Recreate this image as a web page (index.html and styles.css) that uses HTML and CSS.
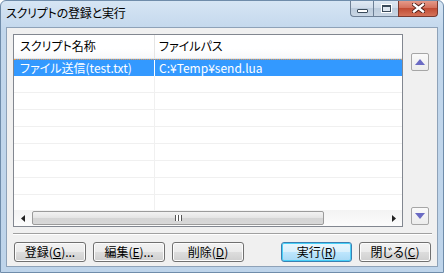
FILE: index.html
```html
<!DOCTYPE html>
<html lang="ja">
<head>
	<meta charset="UTF-8">
	<title>スクリプトの登録と実行</title>
	<link rel="stylesheet" href="styles.css">
</head>
<body>
	<div class="window">
		<div class="titlebar">
			<span class="title">スクリプトの登録と実行</span>
			<div class="caption">
				<div class="cap min"><span class="minbar"></span></div>
				<div class="cap max"><span class="maxbox"></span></div>
				<div class="cap close">
					<svg width="13" height="10" viewBox="0 0 13 10">
						<path d="M2 1.5 L11 8.5 M11 1.5 L2 8.5" stroke="#4a1a14" stroke-width="4.2" stroke-linecap="square"/>
						<path d="M2 1.5 L11 8.5 M11 1.5 L2 8.5" stroke="#fff" stroke-width="2.4" stroke-linecap="square"/>
					</svg>
				</div>
			</div>
		</div>

		<div class="client">
			<div class="main">
				<div class="list">
					<div class="rows">
						<div class="row head"><div class="c1">スクリプト名称</div><div class="c2">ファイルパス</div></div>
						<div class="row sel"><div class="c1">ファイル送信(test.txt)</div><div class="c2">C:¥Temp¥send.lua</div></div>
						<div class="row"><div class="c1"></div><div class="c2"></div></div>
						<div class="row"><div class="c1"></div><div class="c2"></div></div>
						<div class="row"><div class="c1"></div><div class="c2"></div></div>
						<div class="row"><div class="c1"></div><div class="c2"></div></div>
						<div class="row"><div class="c1"></div><div class="c2"></div></div>
						<div class="row"><div class="c1"></div><div class="c2"></div></div>
						<div class="row"><div class="c1"></div><div class="c2"></div></div>
						<div class="row"><div class="c1"></div><div class="c2"></div></div>
					</div>
					<div class="hscroll">
						<div class="arrow"><svg width="4" height="7" viewBox="0 0 4 7"><path d="M4 0 L0 3.5 L4 7 Z" fill="#222"/></svg></div>
						<div class="track">
							<div class="thumb"><span class="grip"></span></div>
						</div>
						<div class="arrow"><svg width="4" height="7" viewBox="0 0 4 7"><path d="M0 0 L4 3.5 L0 7 Z" fill="#222"/></svg></div>
					</div>
				</div>
				<div class="side">
					<div class="sbtn"><svg width="10" height="6" viewBox="0 0 10 6"><path d="M5 0 L10 6 L0 6 Z" fill="#6b6bc4"/></svg></div>
					<div class="sbtn"><svg width="10" height="6" viewBox="0 0 10 6"><path d="M0 0 L10 0 L5 6 Z" fill="#6b6bc4"/></svg></div>
				</div>
			</div>

			<div class="sep"></div>

			<div class="buttons">
				<div class="group">
					<button class="btn">登録(<u>G</u>)...</button>
					<button class="btn">編集(<u>E</u>)...</button>
					<button class="btn">削除(<u>D</u>)</button>
				</div>
				<div class="group">
					<button class="btn default">実行(<u>R</u>)</button>
					<button class="btn">閉じる(<u>C</u>)</button>
				</div>
			</div>
		</div>
	</div>
</body>
</html>
```

FILE: styles.css
```css
body{
	margin: 0;
	font-family: "Noto Sans CJK JP", "Liberation Sans", sans-serif;
	font-size: 12px;
	font-feature-settings: "palt";
}

.window{
	width: 444px;
	height: 273px;
	box-sizing: border-box;
	border: 1px solid #6f8caa;
	border-radius: 6px 6px 0 0;
	background: linear-gradient(#d6e5f4, #c2d7ec 30px, #bed4ea);
	display: flex;
	flex-direction: column;
	overflow: hidden;
}

.titlebar{
	height: 26px;
	display: flex;
	justify-content: space-between;
	align-items: flex-start;
	padding: 0 5px 0 5px;
}
.title{
	margin-top: 3px;
	color: #000;
	line-height: 17px;
	letter-spacing: -0.2px;
}

.caption{
	display: flex;
	height: 17px;
	margin-top: -1px;
}
.cap{
	height: 17px;
	box-sizing: border-box;
	border: 1px solid #6d7f95;
	border-top: none;
	display: flex;
	align-items: center;
	justify-content: center;
}
.min{
	width: 23px;
	border-radius: 0 0 0 4px;
	border-right: none;
	background: linear-gradient(#e2ebf5, #d0dcea 50%, #bccbdc 51%, #c9d6e4);
}
.max{
	width: 25px;
	border-right: none;
	background: linear-gradient(#e2ebf5, #d0dcea 50%, #bccbdc 51%, #c9d6e4);
}
.close{
	width: 40px;
	border-radius: 0 0 4px 0;
	border-color: #7a3a30;
	background: linear-gradient(#e8a090, #d4705c 50%, #c04a32 51%, #d4735a);
}
.minbar{
	width: 9px;
	height: 2px;
	margin-top: 5px;
	background: #fff;
	border: 1px solid #3a4a5a;
	border-radius: 1px;
}
.maxbox{
	width: 7px;
	height: 4px;
	border: 1px solid #3a4a5a;
	border-top-width: 2px;
	background: #dfe7f0;
	box-shadow: 0 0 0 1px #fff;
}

.client{
	flex: 1;
	margin: 0 5px 5px 5px;
	box-sizing: border-box;
	border: 1px solid #8ea2b8;
	background: #f0f0f0;
	padding: 6px 0 4px 0;
	display: flex;
	flex-direction: column;
}

.main{
	display: flex;
	height: 193px;
	margin: 0 8px 0 6px;
	gap: 8px;
}

.list{
	width: 390px;
	box-sizing: border-box;
	border: 1px solid #828790;
	background: #fff;
	display: flex;
	flex-direction: column;
}
.rows{
	flex: 1;
	overflow: hidden;
}
.row{
	display: flex;
	height: 17px;
	box-sizing: border-box;
	border-bottom: 1px solid #f0f0f0;
	line-height: 16px;
}
.c1{
	width: 141px;
	box-sizing: border-box;
	padding-left: 6px;
	border-right: 1px solid #f0f0f0;
	white-space: nowrap;
}
.c2{
	flex: 1;
	padding-left: 4px;
	white-space: nowrap;
}
.head{
	height: 24px;
	line-height: 22px;
	border-bottom: 1px solid #e5e5e5;
	background: linear-gradient(#fff, #fff 60%, #f7f8fa);
	color: #000;
}
.head .c1{
	border-right-color: #e5e5e5;
}
.sel{
	background: #3399ff;
	color: #fff;
	border-top: 1px dotted #e89a50;
	border-bottom: none;
	height: 17px;
	line-height: 15px;
}
.sel .c1{
	border-right-color: #ffffff;
}

.hscroll{
	height: 16px;
	display: flex;
	align-items: center;
	background: linear-gradient(#f3f3f3, #fcfcfc);
}
.arrow{
	width: 17px;
	display: flex;
	justify-content: center;
}
.track{
	flex: 1;
	height: 16px;
}
.thumb{
	width: 292px;
	height: 14px;
	margin: 1px 0 0 1px;
	box-sizing: border-box;
	border: 1px solid #9b9b9b;
	border-radius: 2px;
	background: linear-gradient(#f2f2f2, #e4e4e4 50%, #d4d4d4 51%, #d8d8d8);
	display: flex;
	justify-content: center;
	align-items: center;
}
.grip{
	width: 7px;
	height: 6px;
	background: repeating-linear-gradient(90deg, #555 0 1px, #fff 1px 3px);
}

.side{
	display: flex;
	flex-direction: column;
	justify-content: space-between;
	padding: 19px 0 2px 0;
}
.sbtn{
	width: 18px;
	height: 18px;
	box-sizing: border-box;
	border: 1px solid #a6a6a6;
	border-radius: 2px;
	background: linear-gradient(#fafafa, #ececec);
	display: flex;
	align-items: center;
	justify-content: center;
}

.sep{
	height: 1px;
	margin: 6px 5px 0 6px;
	background: #a0a0a0;
	border-bottom: 1px solid #fff;
}

.buttons{
	display: flex;
	justify-content: space-between;
	margin: 7px 6px 0 7px;
}
.group{
	display: flex;
	gap: 7px;
}
.btn{
	width: 72px;
	height: 20px;
	padding: 0;
	font-family: inherit;
	font-size: 12px;
	font-feature-settings: "palt";
	line-height: 16px;
	color: #000;
	border: 1px solid #707070;
	border-radius: 3px;
	background: linear-gradient(#f2f2f2, #ebebeb 50%, #dddddd 51%, #cfcfcf);
	box-shadow: inset 0 0 0 1px #fcfcfc;
}
.btn u{
	text-decoration-thickness: 1px;
	text-underline-offset: 1px;
}
.default{
	width: 71px;
	border-color: #3c7fb1;
	background: linear-gradient(#eaf6fd, #d9f0fc 50%, #bee6fd 51%, #a7d9f5);
	box-shadow: inset 0 0 0 1px #48d0f8;
}
```
